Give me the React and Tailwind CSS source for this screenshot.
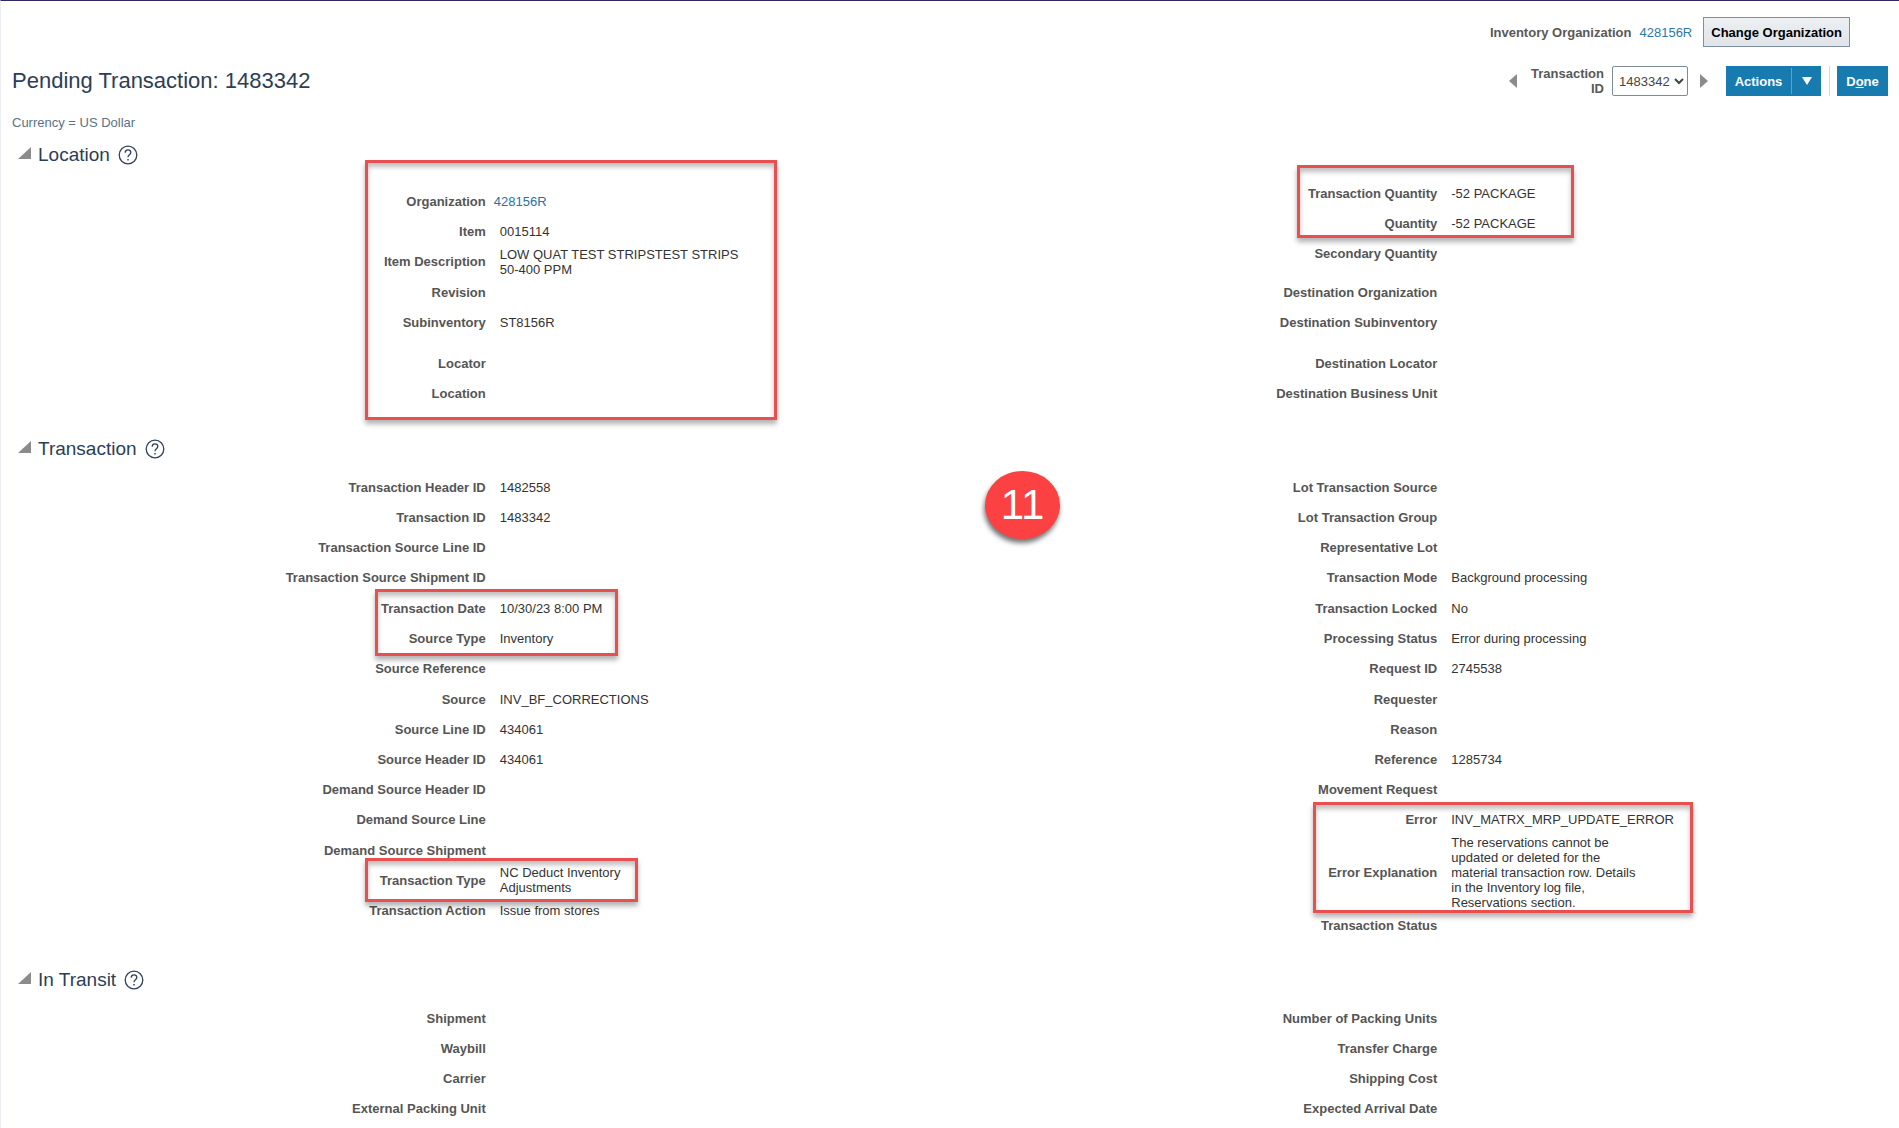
import React, { useState } from 'react';

const locationLeft = [
  { label: 'Organization', value: '428156R', link: true },
  { label: 'Item', value: '0015114' },
  { label: 'Item Description', value: 'LOW QUAT TEST STRIPSTEST STRIPS\n50-400 PPM', tall: true },
  { label: 'Revision' },
  { label: 'Subinventory', value: 'ST8156R' }
];

const locatorLeft = [{ label: 'Locator' }, { label: 'Location', tall: true }];

const quantities = [
  { label: 'Transaction Quantity', value: '-52 PACKAGE' },
  { label: 'Quantity', value: '-52 PACKAGE' },
  { label: 'Secondary Quantity', tall: true }
];

const destination = [{ label: 'Destination Organization' }, { label: 'Destination Subinventory' }];

const destinationLocator = [
  { label: 'Destination Locator' },
  { label: 'Destination Business Unit', tall: true }
];

const transactionLeft = [
  { label: 'Transaction Header ID', value: '1482558' },
  { label: 'Transaction ID', value: '1483342' },
  { label: 'Transaction Source Line ID' },
  { label: 'Transaction Source Shipment ID', tall: true },
  { label: 'Transaction Date', value: '10/30/23 8:00 PM' },
  { label: 'Source Type', value: 'Inventory' },
  { label: 'Source Reference', tall: true },
  { label: 'Source', value: 'INV_BF_CORRECTIONS' },
  { label: 'Source Line ID', value: '434061' },
  { label: 'Source Header ID', value: '434061' },
  { label: 'Demand Source Header ID' },
  { label: 'Demand Source Line', tall: true },
  { label: 'Demand Source Shipment' },
  { label: 'Transaction Type', value: 'NC Deduct Inventory\nAdjustments' },
  { label: 'Transaction Action', value: 'Issue from stores' }
];

const transactionRight = [
  { label: 'Lot Transaction Source' },
  { label: 'Lot Transaction Group' },
  { label: 'Representative Lot' },
  { label: 'Transaction Mode', value: 'Background processing', tall: true },
  { label: 'Transaction Locked', value: 'No' },
  { label: 'Processing Status', value: 'Error during processing' },
  { label: 'Request ID', value: '2745538', tall: true },
  { label: 'Requester' },
  { label: 'Reason' },
  { label: 'Reference', value: '1285734' },
  { label: 'Movement Request' },
  { label: 'Error', value: 'INV_MATRX_MRP_UPDATE_ERROR', tall: true },
  {
    label: 'Error Explanation',
    value:
      'The reservations cannot be\nupdated or deleted for the\nmaterial transaction row. Details\nin the Inventory log file,\nReservations section.'
  },
  { label: 'Transaction Status' }
];

const transitLeft = [
  { label: 'Shipment' },
  { label: 'Waybill' },
  { label: 'Carrier' },
  { label: 'External Packing Unit' }
];

const transitRight = [
  { label: 'Number of Packing Units' },
  { label: 'Transfer Charge' },
  { label: 'Shipping Cost' },
  { label: 'Expected Arrival Date' }
];

const Fields = ({ rows, className = '' }) => (
  <dl className={className}>
    {rows.map(({ label, value, link, tall }) => (
      <div key={label} className={`grid grid-cols-2 items-center ${tall ? 'min-h-[31px]' : 'min-h-[30px]'}`}>
        <dt className="text-right font-bold text-[#555555]">{label}</dt>
        <dd className={`whitespace-pre-line text-[#333333] ${link ? 'pl-2' : 'pl-3.5'}`}>
          {link ? <a href="#organization" className="text-[#2572a4]">{value}</a> : value}
        </dd>
      </div>
    ))}
  </dl>
);

const Highlight = ({ className }) => (
  <div
    aria-hidden="true"
    className={`pointer-events-none absolute border-3 border-[#e94f4e] shadow-[0_4px_5px_rgba(0,0,0,0.3),inset_0_4px_5px_rgba(0,0,0,0.25)] ${className}`}
  />
);

const HelpIcon = () => (
  <svg width="20" height="20" viewBox="0 0 20 20" fill="none" stroke="#33425a" strokeWidth="1.3">
    <circle cx="10" cy="10" r="8.8" />
    <path d="M7.2 7.7c0-1.7 1.2-2.8 2.8-2.8s2.8 1 2.8 2.5c0 2.2-2.8 2.4-2.8 4.6v.3" />
    <path d="M10 14v1.6" strokeWidth="1.5" />
  </svg>
);

const Section = ({ title, className = '', children }) => {
  const [open, setOpen] = useState(true);

  return (
    <section className={className}>
      <div className="flex h-6 items-center pl-[17px]">
        <button type="button" aria-expanded={open} aria-label={title} onClick={() => setOpen(!open)}>
          <svg width="13" height="12" viewBox="0 0 13 12" className="mb-1">
            <path d="M13 0v12H0z" fill="#8b8b8b" />
          </svg>
        </button>
        <h2 className="mr-2 ml-[7px] text-[19px] leading-6 text-[#2c3e55]">{title}</h2>
        <button type="button" aria-label={`Help for ${title}`}>
          <HelpIcon />
        </button>
      </div>
      {open && <div className="relative mt-[11px] -mr-3.5 grid grid-cols-2 pl-[9px]">{children}</div>}
    </section>
  );
};

const App = () => {
  const [transactionId, setTransactionId] = useState('1483342');

  return (
    <main className="min-h-screen overflow-x-hidden border-t border-l border-t-[#2d2860] border-l-[#eceef2] bg-white font-['Liberation_Sans',Arial,sans-serif] text-[13px] leading-[15px]">
      <div className="mt-4 flex items-center justify-end pr-[49px]">
        <span className="font-bold text-[#585858]">Inventory Organization</span>
        <a href="#organization" className="ml-2 text-[#2b7aa8]">428156R</a>
        <button
          type="button"
          className="ml-[11px] h-[30px] border border-[#7d90a0] bg-linear-to-b from-[#eef0f2] to-[#e0e4e8] px-[7px] font-bold text-black"
        >
          Change Organization
        </button>
      </div>

      <header className="mt-[19px] flex h-[30px] items-center justify-between pr-[11px] pl-[11px]">
        <h1 className="text-[22px] leading-7 text-[#2c3e55]">Pending Transaction: {transactionId}</h1>
        <div className="flex items-center">
          <button type="button" aria-label="Previous transaction">
            <svg width="8" height="14" viewBox="0 0 8 14"><path d="M8 0v14L0 7z" fill="#8b8b8b" /></svg>
          </button>
          <label htmlFor="transaction-id" className="ml-3 w-[75px] text-right font-bold text-[#585858]">
            Transaction ID
          </label>
          <select
            id="transaction-id"
            value={transactionId}
            onChange={(e) => setTransactionId(e.target.value)}
            className="ml-2 h-[30px] w-[76px] rounded-xs border border-[#7d8b99] bg-white pl-0.5 text-[#444444]"
          >
            <option value="1483342">1483342</option>
          </select>
          <button type="button" aria-label="Next transaction" className="ml-3">
            <svg width="8" height="14" viewBox="0 0 8 14"><path d="M0 0v14l8-7z" fill="#8b8b8b" /></svg>
          </button>
          <div className="ml-[18px] flex h-[30px] items-center bg-[#187bb0] text-white">
            <button type="button" className="w-[65px] font-bold">Actions</button>
            <button type="button" aria-label="More actions" className="flex h-[26px] w-[30px] items-center justify-center border-l border-[#5aa3cb]">
              <svg width="10" height="8" viewBox="0 0 10 8"><path d="M0 0h10L5 8z" fill="#ffffff" /></svg>
            </button>
          </div>
          <div className="mr-[7px] ml-2 h-[30px] border-l border-[#d6d9dc]" />
          <button type="button" className="h-[30px] w-[51px] bg-[#187bb0] font-bold text-white">
            D<span className="underline">o</span>ne
          </button>
        </div>
      </header>

      <p className="mt-[19px] pl-[11px] text-[#5b7282]">Currency = US Dollar</p>

      <Section title="Location" className="mt-[13px]">
        <div className="relative">
          <Fields rows={locationLeft} className="mt-2" />
          <Fields rows={locatorLeft} className="mt-[11px]" />
          <Highlight className="-top-[18px] left-[calc(50%-121px)] h-[260px] w-[412px]" />
        </div>
        <div className="relative">
          <Fields rows={quantities} />
          <Fields rows={destination} className="mt-2" />
          <Fields rows={destinationLocator} className="mt-[11px]" />
          <Highlight className="-top-[13px] left-[calc(50%-140px)] h-[73px] w-[277px]" />
        </div>
      </Section>

      <Section title="Transaction" className="mt-7">
        <div className="relative">
          <Fields rows={transactionLeft} />
          <Highlight className="top-[117px] left-[calc(50%-111px)] h-[67px] w-[243px]" />
          <Highlight className="top-[386px] left-[calc(50%-121px)] h-[44px] w-[273px]" />
        </div>
        <div className="relative">
          <Fields rows={transactionRight} />
          <Highlight className="top-[330px] left-[calc(50%-124px)] h-[111px] w-[380px]" />
        </div>
        <div className="absolute -top-px left-[calc(50%+28px)] flex h-[68px] w-[75px] items-center justify-center rounded-[50%] bg-[#fb4141] text-[42px] leading-none text-white shadow-[-1px_4px_5px_rgba(0,0,0,0.55)]">
          11
        </div>
      </Section>

      <Section title="In Transit" className="mt-7">
        <Fields rows={transitLeft} />
        <Fields rows={transitRight} />
      </Section>
    </main>
  );
};

export default App;
